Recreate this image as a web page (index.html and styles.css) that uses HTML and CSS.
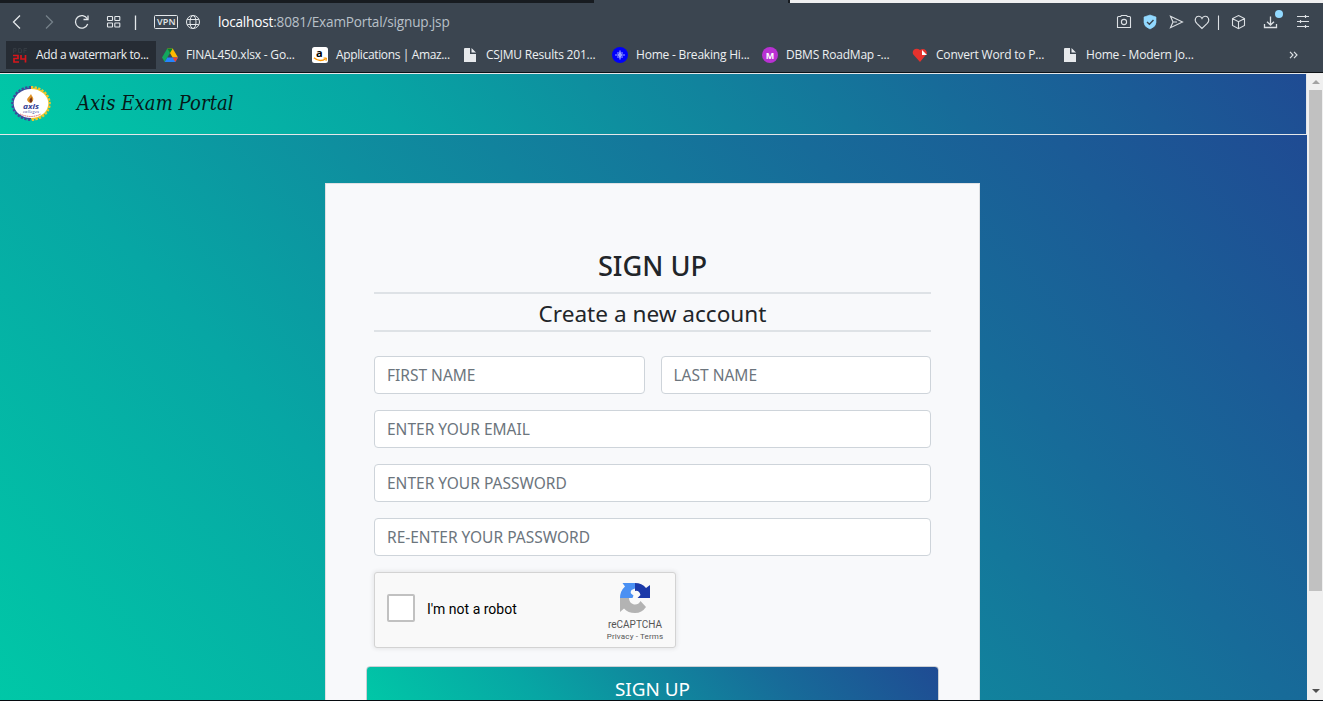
FILE: index.html
```html
<!DOCTYPE html>
<html lang="en">
<head>
<meta charset="utf-8">
<title>Axis Exam Portal</title>
<link rel="stylesheet" href="styles.css">
</head>
<body>
<div class="tabstrip"><span class="tab-dark"></span><span class="tab-active"></span><span class="tab-gap"></span><span class="tab-light"></span></div>
<div class="toolbar">
  <svg class="nav-icons" width="210" height="38" viewBox="0 3 210 38" fill="none" stroke="#e4e8eb" stroke-width="1.3">
    <path d="M20 15.500L13.500 22L20 28.500"/>
    <path d="M46 15.500L52.500 22L46 28.500" stroke="#75808a"/>
    <path d="M87.300 18.800A6.300 6.300 0 1 0 87.700 24"/><path d="M88 15.500V19.500H83.500"/>
    <g stroke-width="1.100"><rect x="107.500" y="16.500" width="5" height="4" rx=".6"/><rect x="114.800" y="16.500" width="5" height="4" rx=".6"/><rect x="107.500" y="23" width="5" height="4" rx=".6"/><rect x="114.800" y="23" width="5" height="4" rx=".6"/></g>
    <path d="M135.500 15.500V30"/>
    <rect x="154.500" y="15.500" width="23" height="13" rx="1" stroke-width="1"/>
    <g stroke-width="1"><circle cx="193" cy="22" r="6.500"/><ellipse cx="193" cy="22" rx="3" ry="6.500"/><path d="M187.200 19.500H198.800M187.200 24.500H198.800"/></g>
    <text class="vpn" x="157" y="25.300" textLength="18.500">VPN</text>
  </svg>
  <div class="url"><b>localhost</b>:8081/ExamPortal/signup.jsp</div>
  <svg class="tool-icons" width="213" height="38" viewBox="1110 0 213 38" fill="none" stroke="#dce0e4" stroke-width="1.100">
    <path d="M1118.500 13.500H1120.500L1121.500 12.500H1126.500L1127.500 13.500H1129.500Q1130.500 13.500 1130.500 14.500V24.500H1117.500V14.500Q1117.500 13.500 1118.500 13.500Z"/><circle cx="1124" cy="19" r="2.600"/>
    <path d="M1150 12L1156 14V19.500Q1156 23.500 1150 26Q1144 23.500 1144 19.500V14Z" fill="#92d9ff" stroke="#92d9ff" stroke-width=".6"/><path d="M1147 19L1149.400 21.200L1153.500 17" stroke="#3b4550" stroke-width="1.400"/>
    <path d="M1170.500 13.300L1182.500 19L1170.500 24.700L1173 19ZM1173 19H1177"/>
    <path d="M1202 25.500L1196.800 20.300C1193.500 16.800 1196 13 1199 13.300C1200.800 13.500 1201.600 14.700 1202 15.500C1202.400 14.700 1203.200 13.500 1205 13.300C1208 13 1210.500 16.800 1207.200 20.300Z"/>
    <path d="M1218.500 12.500V27"/>
    <path d="M1238.500 12.500L1244.500 15.500V22.500L1238.500 25.700L1232.500 22.500V15.500ZM1232.700 15.700L1238.500 18.700L1244.300 15.700M1238.500 18.700V25.500"/>
    <path d="M1264.500 21V24.500H1276.500V21M1270.500 13.500V22M1267 18.700L1270.500 22L1274 18.700" stroke-width="1.300"/><circle cx="1279" cy="11" r="4" fill="#92d9ff" stroke="none"/>
    <path d="M1297 13.500H1309M1297 18.500H1309M1297 23.500H1309M1305.500 12V15M1300.500 17V20M1305.500 22V25" stroke-width="1.200"/>
  </svg>
</div>
<div class="bookmarks">
  <div class="bm bm-hover tight"><svg width="16" height="16" viewBox="0 0 16 16" fill="none"><path d="M1.500 6V1.500H4V4H1.500M6.500 1.500H8Q9.500 1.500 9.500 3V5.500H6.500ZM12 6V1.500H15M12 3.500H14.500" stroke="#343b42"/><path d="M1 8.500H6V11.500H2V15H7M9 8V12H14M13.500 8V15.500" stroke="#d5161b" stroke-width="1.700"/></svg><span>Add a watermark to...</span></div>
  <div class="bm"><svg width="16" height="16" viewBox="0 0 16 16"><path d="M5.300 1.500H10.700L16 10.500H10.600Z" fill="#ffba00"/><path d="M5.300 1.500L8 6L2.700 15L0 10.500Z" fill="#13a75d"/><path d="M5.300 10.500H16L13.300 15H2.700Z" fill="#2684fc"/><path d="M5.300 1.500H10.700L8 6Z" fill="#00832d"/><path d="M10.600 10.500H16L13.300 15Z" fill="#ea4335"/></svg><span>FINAL450.xlsx - Go...</span></div>
  <div class="bm tight"><svg width="16" height="16" viewBox="0 0 16 16"><rect width="16" height="16" rx="2.500" fill="#fff"/><text class="amz" x="4" y="10">a</text><path d="M2 10.800Q8 16 14 11.500" fill="none" stroke="#ff9900" stroke-width="1.500"/><path d="M11.500 11H14.500L14 14" fill="none" stroke="#ff9900"/></svg><span>Applications | Amaz...</span></div>
  <div class="bm"><svg width="16" height="16" viewBox="0 0 16 16"><path d="M3 1H8V7H14V15H2V2Q2 1 3 1ZM9.500 1L14 5.500H9.500Z" fill="#e6e9ec"/></svg><span>CSJMU Results 201...</span></div>
  <div class="bm"><svg width="16" height="16" viewBox="0 0 16 16"><circle cx="8" cy="8" r="8" fill="#0000fa"/><path d="M3 8H13M5 6H11M5 10H11M8 3.500V12.500" stroke="#9ba4ff" stroke-width="1.200"/><circle cx="8" cy="8" r="1.300" fill="#6370ff" stroke="#b4bbff"/></svg><span>Home - Breaking Hi...</span></div>
  <div class="bm"><svg width="16" height="16" viewBox="0 0 16 16"><circle cx="8" cy="8" r="8" fill="#b931d3"/><text class="mm" x="8" y="11.500">M</text></svg><span>DBMS RoadMap -...</span></div>
  <div class="bm"><svg width="16" height="16" viewBox="0 0 16 16"><path d="M8 15L1.300 7.500C-1 3.500 4 -.5 8 3C11 .5 15 2.500 15 6.500Z" fill="#e5322d"/><path d="M10 3L15 8H10Z" fill="#fff"/></svg><span>Convert Word to P...</span></div>
  <div class="bm"><svg width="16" height="16" viewBox="0 0 16 16"><path d="M3 1H8V7H14V15H2V2Q2 1 3 1ZM9.500 1L14 5.500H9.500Z" fill="#e6e9ec"/></svg><span>Home - Modern Jo...</span></div>
  <svg class="more" width="10" height="8" viewBox="0 0 10 8" fill="none" stroke="#dce0e4" stroke-width="1.200"><path d="M1 .8L4 4L1 7.200M5 .8L8 4L5 7.200"/></svg>
</div>
<div class="viewport">
  <div class="page">
    <header class="navbar">
      <svg class="logo" width="42" height="36" viewBox="0 0 42 36">
        <path d="M21 2A17.800 15.500 0 0 0 21 33" fill="none" stroke="#3e4a9c" stroke-width="4" stroke-dasharray="2.200 1.300"/><path d="M21 2A17.800 15.500 0 0 1 21 33" fill="none" stroke="#f0c52d" stroke-width="4" stroke-dasharray="2.200 1.300"/>
        <path d="M21 3A17 14.500 0 0 0 21 32" fill="none" stroke="#3e4a9c" stroke-width="2.500"/><path d="M21 3A17 14.500 0 0 1 21 32" fill="none" stroke="#f0c52d" stroke-width="2.500"/>
        <ellipse cx="21" cy="17.500" rx="17.300" ry="14.500" fill="#fff"/>
        <path d="M20 17C14 13 19 12 21 8C22 11 25 12 22 16" fill="#e09224"/><path d="M21 17C18 14 20 13 22 11C21 14 24 14 21 17" fill="#74341c"/>
        <text class="logo-name" x="13" y="23.200" textLength="16" lengthAdjust="spacingAndGlyphs">axis</text><text class="logo-sub" x="13" y="27" textLength="16">colleges</text>
        <path d="M10 28Q21 33 31 28" fill="none" stroke="#df5d64" stroke-dasharray="1.200 .6"/>
      </svg>
      <span class="brand">Axis Exam Portal</span>
    </header>
    <main class="hero">
      <form class="card">
        <h2>SIGN UP</h2>
        <h4>Create a new account</h4>
        <div class="row"><input placeholder="FIRST NAME"><input placeholder="LAST NAME"></div>
        <input placeholder="ENTER YOUR EMAIL">
        <input placeholder="ENTER YOUR PASSWORD">
        <input placeholder="RE-ENTER YOUR PASSWORD">
        <div class="captcha">
          <span class="box"></span><span class="robot">I'm not a robot</span>
          <div class="rc">
            <svg width="32" height="32" viewBox="0 0 32 32"><path d="M16 1V6.500L12.500 8Q11 10 12 11.500L14.500 13.500L13.500 16H1Q1 9 6 4.500L3.500 1Z" fill="#4a90f3"/><path d="M16 1Q23 1 27 6L31 3V16H18.500L21.500 13Q20 8 16 9Z" fill="#1c3aa9"/><path d="M1 16H10Q10 21 15 22.500Q19.500 23 21.500 19L27 25Q23 31 16 31Q9 31 5 26.500L1 30Z" fill="#b3b3b3"/></svg>
            <span class="rc-name">reCAPTCHA</span><span class="rc-links">Privacy - Terms</span>
          </div>
        </div>
        <button type="button" class="submit">SIGN UP</button>
      </form>
    </main>
  </div>
  <div class="scrollbar"><svg width="15" height="17" viewBox="0 0 15 17"><path d="M4 11L8 7L12 11Z" fill="#a3a3a3"/></svg><span class="thumb"></span><svg class="down" width="15" height="17" viewBox="0 0 15 17"><path d="M4 6L8 10L12 6Z" fill="#505050"/></svg></div>
</div>
<div class="edge"></div>
</body>
</html>
```
FILE: styles.css
```css
* { box-sizing: border-box; }
:root { --brand-gradient: linear-gradient(49deg, #00c9a7 0%, #07a6a4 30%, #0e8f9f 46%, #176b99 72%, #1f4b93 100%); }
body { margin: 0; width: 1323px; height: 701px; overflow: hidden; display: flex; flex-direction: column; font-family: "Noto Sans", sans-serif; }
svg { display: block; flex: none; }
.tabstrip { height: 3px; display: flex; background: #171b20; flex: none; }
.tab-dark { width: 594px; background: #171b20; }
.tab-active { width: 194px; background: #3b4550; }
.tab-gap { width: 2px; background: #171b20; }
.tab-light { flex: 1; background: #f0f0f1; }
.toolbar { height: 38px; flex: none; display: flex; background: #3b4550; }
.nav-icons { height: 38px; }
.url { flex: 1; margin-left: 8px; font: 13.6px/38px "Open Sans", sans-serif; color: #b8c0c8; letter-spacing: -.18px; }
.url b { font-weight: 500; color: #fff; letter-spacing: -.2px; }
.vpn { font: 600 9px "Open Sans", sans-serif; fill: #e4e8eb; stroke: none; }
.bookmarks { height: 31px; flex: none; display: flex; background: #3b4550; padding-left: 6px; }
.bm { width: 150px; height: 28px; display: flex; align-items: center; padding-left: 6px; font: 12px/28px "Open Sans", sans-serif; color: #edf0f2; white-space: nowrap; letter-spacing: -.2px; }
.bm svg { margin-right: 8px; }
.bm-hover { background: #262c34; }
.tight { letter-spacing: -.36px; }
.more { margin: 10px 0 0 83px; }
.amz { font: bold 11px/1 "Open Sans", sans-serif; letter-spacing: 0; }
.mm { font: bold 9px/1 "Open Sans", sans-serif; letter-spacing: 0; fill: #fff; text-anchor: middle; }
.viewport { height: 628px; flex: none; display: flex; border-top: 1px solid #0e1318; background: #eee; }
.page { width: 1307px; overflow: hidden; display: flex; flex-direction: column; }
.navbar { height: 62px; flex: none; display: flex; align-items: center; padding-left: 10px; border: 1px solid #e4e7ea; border-left: 0; background: var(--brand-gradient); }
.logo { margin-bottom: 1px; }
.logo-name { font: italic bold 7px "Open Sans", sans-serif; fill: #344197; }
.logo-sub { font: italic 4px "Open Sans", sans-serif; fill: #344197; }
.brand { margin: 0 0 3px 25px; font: italic 20px "DejaVu Serif Condensed", "DejaVu Serif", serif; letter-spacing: .1px; color: #061918; }
.hero { height: 590px; flex: none; padding-top: 48px; background: var(--brand-gradient); }
.card { width: 655px; height: 640px; margin-left: 325px; padding: 66px 48px 0; background: #f8f9fb; border: 1px solid #dfe1e4; display: flex; flex-direction: column; }
h2 { margin: 0; height: 44px; font-size: 27.200px; line-height: 32px; font-weight: 500; text-align: center; color: #212529; border-bottom: 2px solid #dee2e6; }
h4 { margin: 0 0 24px; height: 38px; font-size: 22.600px; line-height: 39px; font-weight: 400; text-align: center; color: #212529; border-bottom: 2px solid #dee2e6; }
.row { display: grid; grid-template-columns: 1fr 1fr; gap: 16px; }
input { width: 100%; height: 38px; flex: none; margin: 0 0 16px; padding: 0 12px; border: 1px solid #ced4da; border-radius: 4px; font: 15.500px "Noto Sans", sans-serif; background: #fff; }
input::placeholder { color: #6c757d; opacity: 1; }
.captcha { width: 302px; height: 76px; display: flex; align-items: center; padding-left: 12px; background: #f9f9f9; border: 1px solid #d3d3d3; border-radius: 3px; box-shadow: 0 0 4px 1px rgba(0,0,0,.08); }
.box { width: 28px; height: 28px; margin-bottom: 4px; border: 2px solid #c1c1c1; border-radius: 2px; background: #fff; }
.robot { width: 178px; margin: 0 0 2px 12px; font: 14px Roboto, sans-serif; color: #000; }
.rc { width: 60px; height: 60px; display: flex; flex-direction: column; align-items: center; margin-top: 4px; color: #555; font: 10px/13px Roboto, sans-serif; white-space: nowrap; }
.rc-name { margin-top: 4px; }
.rc-links { font-size: 8px; line-height: 12px; letter-spacing: .15px; }
.submit { width: 573px; height: 46px; flex: none; margin: 18px 0 0 -8px; padding: 0; border: 1px solid #ccd0d4; border-radius: 4px; color: #fff; font: 18.900px/24px "Noto Sans", sans-serif; background: var(--brand-gradient); }
.scrollbar { width: 16px; display: flex; flex-direction: column; background: #f0f0f0; padding-left: 1px; }
.thumb { width: 13px; height: 501px; margin-left: 1px; background: #c1c1c1; }
.down { margin-top: auto; }
.edge { height: 1px; background: #070b10; }
```
